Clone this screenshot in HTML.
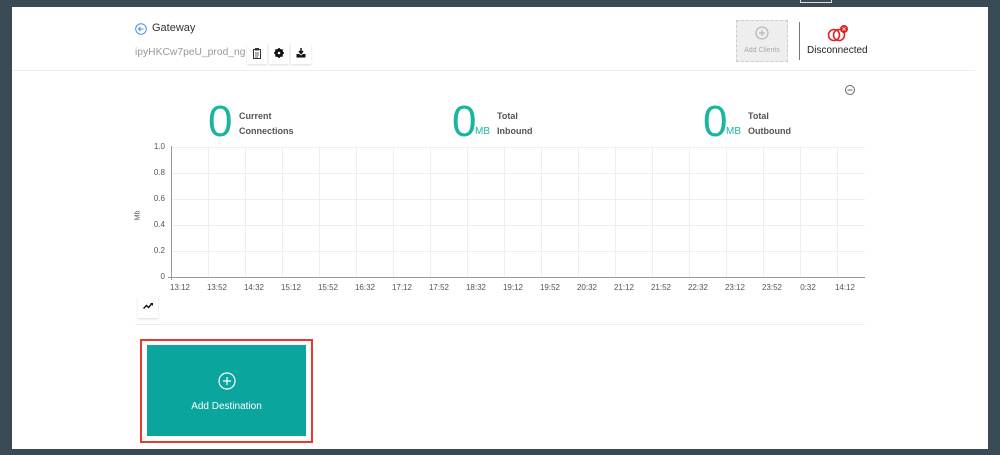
<!DOCTYPE html>
<html><head><style>
*{margin:0;padding:0;box-sizing:border-box}
body{width:1000px;height:455px;background:#3a4a55;position:relative;overflow:hidden;font-family:"Liberation Sans",sans-serif}
.page{position:absolute;left:12px;top:7px;width:976px;height:442px;background:#fff}
.abs{position:absolute}
.btn{position:absolute;width:20px;height:21px;background:#fff;box-shadow:0 1px 2px rgba(0,0,0,.15)}
.btn svg{position:absolute;left:5px;top:5px}
.num{position:absolute;font-size:44px;color:#1ab5a0;font-weight:300;line-height:1}
.lbl{position:absolute;font-size:9px;font-weight:bold;color:#555;line-height:15px}
.mb{position:absolute;font-size:10px;color:#1ab5a0}
.xl{position:absolute;top:283px;font-size:8px;color:#555;width:40px;margin-left:-20px;text-align:center}
.yl{position:absolute;left:140px;font-size:8px;color:#555;width:25px;text-align:right}
</style></head><body>
<div class="page"></div>
<div class="abs" style="left:800px;top:0;width:32px;height:3px;border:1px solid #ddd;border-top:none"></div>
<!-- header -->
<svg class="abs" style="left:135px;top:23px" width="12" height="12"><circle cx="6" cy="6" r="5.3" fill="none" stroke="#4a90e2" stroke-width="1"/><path d="M8.5 6H3.5M5.5 4L3.5 6L5.5 8" fill="none" stroke="#4a90e2" stroke-width="1"/></svg>
<div class="abs" style="left:152px;top:22px;font-size:11px;color:#333">Gateway</div>
<div class="abs" style="left:135px;top:47px;font-size:10.3px;color:#999">ipyHKCw7peU_prod_ng</div>
<div class="btn" style="left:247px;top:43px"><svg width="10" height="11"><rect x="1.5" y="1.5" width="7" height="9" fill="none" stroke="#333"/><rect x="3" y="0" width="4" height="2.5" fill="#333"/><path d="M3 5h4M3 7h4M3 9h3" stroke="#333" stroke-width=".8"/></svg></div>
<div class="btn" style="left:269px;top:43px"><svg width="10" height="10"><circle cx="5" cy="5" r="3.2" fill="none" stroke="#111" stroke-width="2"/><path d="M5 0v10M0 5h10M1.5 1.5l7 7M8.5 1.5l-7 7" stroke="#111" stroke-width="1.6"/><circle cx="5" cy="5" r="1.3" fill="#fff"/></svg></div>
<div class="btn" style="left:291px;top:43px"><svg width="10" height="10"><path d="M5 0v5M3 3l2 2.5L7 3" stroke="#111" stroke-width="1.5" fill="none"/><path d="M0.5 6h2.5l2 1.5 2-1.5h2.5v3.5h-9z" fill="#111"/></svg></div>
<div class="abs" style="left:736px;top:20px;width:52px;height:42px;background:#eee;border:1px dashed #ccc;text-align:center">
<svg style="margin-top:5px" width="14" height="14"><circle cx="7" cy="7" r="6" fill="none" stroke="#aaa"/><path d="M7 4v6M4 7h6" stroke="#aaa"/></svg>
<div style="font-size:7px;color:#aaa;margin-top:2px">Add Clients</div></div>
<div class="abs" style="left:799px;top:22px;width:1px;height:38px;background:#777"></div>
<svg class="abs" style="left:824px;top:24px" width="26" height="20"><circle cx="10" cy="11" r="5.5" fill="none" stroke="#e02424" stroke-width="1.6"/><circle cx="15" cy="11" r="5.5" fill="none" stroke="#e02424" stroke-width="1.6"/><circle cx="20" cy="5" r="4" fill="#e02424"/><path d="M18.5 3.5l3 3M21.5 3.5l-3 3" stroke="#fff" stroke-width=".8"/></svg>
<div class="abs" style="left:807px;top:45px;font-size:10px;color:#222">Disconnected</div>
<div class="abs" style="left:12px;top:70px;width:963px;height:1px;background:#eee"></div>
<svg class="abs" style="left:844px;top:84px" width="12" height="12"><circle cx="6" cy="6" r="4.5" fill="none" stroke="#666"/><path d="M3.5 6h5" stroke="#666"/></svg>
<!-- stats -->
<div class="num" style="left:208px;top:100px">0</div>
<div class="lbl" style="left:239px;top:109px">Current<br>Connections</div>
<div class="num" style="left:452px;top:100px">0</div><div class="mb" style="left:475px;top:126px">MB</div>
<div class="lbl" style="left:497px;top:109px">Total<br>Inbound</div>
<div class="num" style="left:703px;top:100px">0</div><div class="mb" style="left:726px;top:126px">MB</div>
<div class="lbl" style="left:748px;top:109px">Total<br>Outbound</div>
<!-- chart -->
<svg class="abs" style="left:0;top:0" width="1000" height="300">
<g stroke="#eee" stroke-width="1">
<line x1="171" y1="147.5" x2="865" y2="147.5"/><line x1="171" y1="173.5" x2="865" y2="173.5"/><line x1="171" y1="199.5" x2="865" y2="199.5"/><line x1="171" y1="225.5" x2="865" y2="225.5"/><line x1="171" y1="251.5" x2="865" y2="251.5"/>
<line x1="208.5" y1="147" x2="208.5" y2="277"/><line x1="245.5" y1="147" x2="245.5" y2="277"/><line x1="282.5" y1="147" x2="282.5" y2="277"/><line x1="319.5" y1="147" x2="319.5" y2="277"/><line x1="356.5" y1="147" x2="356.5" y2="277"/><line x1="393.5" y1="147" x2="393.5" y2="277"/><line x1="430.5" y1="147" x2="430.5" y2="277"/><line x1="467.5" y1="147" x2="467.5" y2="277"/><line x1="504.5" y1="147" x2="504.5" y2="277"/><line x1="541.5" y1="147" x2="541.5" y2="277"/><line x1="578.5" y1="147" x2="578.5" y2="277"/><line x1="615.5" y1="147" x2="615.5" y2="277"/><line x1="652.5" y1="147" x2="652.5" y2="277"/><line x1="689.5" y1="147" x2="689.5" y2="277"/><line x1="726.5" y1="147" x2="726.5" y2="277"/><line x1="763.5" y1="147" x2="763.5" y2="277"/><line x1="800.5" y1="147" x2="800.5" y2="277"/><line x1="837.5" y1="147" x2="837.5" y2="277"/>
</g>
<g stroke="#999"><line x1="171.5" y1="146" x2="171.5" y2="280"/><line x1="168" y1="277.5" x2="865" y2="277.5"/></g>
</svg>
<div class="yl" style="top:142px">1.0</div><div class="yl" style="top:168px">0.8</div><div class="yl" style="top:194px">0.6</div><div class="yl" style="top:220px">0.4</div><div class="yl" style="top:246px">0.2</div><div class="yl" style="top:272px">0</div>
<div class="abs" style="left:133px;top:212px;font-size:7px;color:#555;transform:rotate(-90deg)">Mb</div>
<div class="xl" style="left:180px">13:12</div><div class="xl" style="left:217px">13:52</div><div class="xl" style="left:254px">14:32</div><div class="xl" style="left:291px">15:12</div><div class="xl" style="left:328px">15:52</div><div class="xl" style="left:365px">16:32</div><div class="xl" style="left:402px">17:12</div><div class="xl" style="left:439px">17:52</div><div class="xl" style="left:476px">18:32</div><div class="xl" style="left:513px">19:12</div><div class="xl" style="left:550px">19:52</div><div class="xl" style="left:587px">20:32</div><div class="xl" style="left:624px">21:12</div><div class="xl" style="left:661px">21:52</div><div class="xl" style="left:698px">22:32</div><div class="xl" style="left:735px">23:12</div><div class="xl" style="left:772px">23:52</div><div class="xl" style="left:808px">0:32</div><div class="xl" style="left:845px">14:12</div>
<div class="btn" style="left:138px;top:297px"><svg width="10" height="8"><path d="M0.5 6.5l3-3 2 2 3.5-4" stroke="#111" stroke-width="1.4" fill="none"/><path d="M7 1h3v3z" fill="#111"/></svg></div>
<div class="abs" style="left:135px;top:324px;width:730px;height:1px;background:#eee"></div>
<!-- add destination -->
<div class="abs" style="left:140px;top:339px;width:173px;height:104px;border:2px solid #e8392c"></div>
<div class="abs" style="left:147px;top:345px;width:159px;height:91px;background:#0aa59c;text-align:center;color:#fff">
<svg style="margin-top:27px" width="18" height="18"><circle cx="9" cy="9" r="8" fill="none" stroke="#fff" stroke-width="1.2"/><path d="M9 5v8M5 9h8" stroke="#fff" stroke-width="1.2"/></svg>
<div style="font-size:10px;margin-top:6px">Add Destination</div></div>
</body></html>
